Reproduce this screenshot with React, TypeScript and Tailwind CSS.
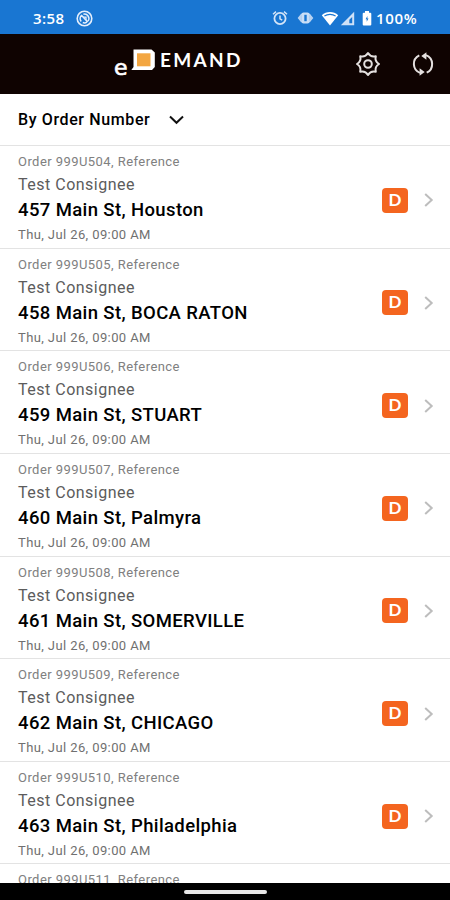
import React from "react";

interface Order {
  id: string;
  address: string;
}

const ORDERS: Order[] = [
  { id: "999U504", address: "457 Main St, Houston" },
  { id: "999U505", address: "458 Main St, BOCA RATON" },
  { id: "999U506", address: "459 Main St, STUART" },
  { id: "999U507", address: "460 Main St, Palmyra" },
  { id: "999U508", address: "461 Main St, SOMERVILLE" },
  { id: "999U509", address: "462 Main St, CHICAGO" },
  { id: "999U510", address: "463 Main St, Philadelphia" },
  { id: "999U511", address: "" },
];

function StatusBar() {
  return (
    <div className="flex h-[34px] shrink-0 items-center bg-[#1976d2] pt-[2px] pr-[32px] pl-[33px] text-white">
      <span className="w-[43px] font-['Open_Sans',sans-serif] text-[15px] leading-none font-semibold tracking-[0.4px] whitespace-nowrap">3:58</span>
      <svg width="17" height="17" viewBox="0 0 17 17" fill="none" stroke="#e4eefc">
        <circle cx="8.5" cy="8.5" r="7.3" strokeWidth="1.6" />
        <path d="M5.2 11.4A4.2 4.2 0 0 1 5.6 5.4M7.4 4.3a4.3 4.3 0 0 1 4.6 6.7M6.8 12.5a4 4 0 0 0 4-.4M5.2 5l6.5 7" strokeWidth="1.5" />
        <path d="M7.2 7.1h2.8v2.8" strokeWidth="1.3" />
      </svg>
      <div className="flex-1" />

      {/* Alarm */}
      <svg width="16" height="16" viewBox="0 0 16 16" fill="none" stroke="#d3e4f8" strokeWidth="1.8">
        <circle cx="8" cy="8.5" r="5.6" />
        <path d="M8 5.5v3.3l2.2 1.4M1 4.2l3-2.6M15 4.2l-3-2.6" strokeWidth="1.5" />
      </svg>
      {/* Vibrate */}
      <svg className="ml-[9px]" width="17" height="14" viewBox="0 0 17 14" fill="none">
        <path d="M4.8 2.8 1.5 7l3.3 4.2M12.2 2.8 15.5 7l-3.3 4.2" fill="#b7d2f2" stroke="#b7d2f2" strokeWidth="1.3" />
        <rect x="4.5" y="1.4" width="8" height="11.2" rx="2" fill="#c9def6" />
        <rect x="7.3" y="3.8" width="2.4" height="6.4" fill="#1976d2" />
      </svg>
      {/* Wifi */}
      <svg className="ml-[7px]" width="18" height="15" viewBox="0 0 18 15">
        <path d="M9 14.5.8 4.2C5.2 0 12.8 0 17.2 4.2z" fill="#fff" />
        <path d="M3.4 5C6.5 2.8 11.5 2.8 14.6 5" fill="none" stroke="#1976d2" strokeWidth="1.1" />
      </svg>
      {/* Signal */}
      <svg className="ml-px" width="15" height="15" viewBox="0 0 15 15">
        <path d="M14.2.8v13.400H.8z" fill="#cfe1f7" />
        <path d="M12.2 6v6.3H9.3V8.8z" fill="#1976d2" />
      </svg>
      {/* Battery */}
      <svg className="ml-[7px]" width="10" height="15" viewBox="0 0 10 15">
        <path d="M3 0h4v1.7h1.2q1.100 0 1.100 1.100v10.600q0 1.100-1.100 1.100H1.800Q.7 14.500.7 13.400V2.800q0-1.100 1.100-1.100H3z" fill="#fff" />
        <path d="M5.4 5 3.6 8.2h1.1v2.6l1.8-3.2H5.4z" fill="#1976d2" />
      </svg>
      <span className="ml-[4px] w-[42px] font-['Open_Sans',sans-serif] text-[15px] leading-none font-semibold tracking-[0.7px] whitespace-nowrap">100%</span>
    </div>
  );
}

function Logo() {
  return (
    <div className="flex h-[34px] w-[130px] items-start text-white">
      <span className="mt-[8px] w-[17px] font-['DejaVu_Sans',sans-serif] text-[22px] leading-[26px] [-webkit-text-stroke:0.7px_white]">e</span>
      <svg className="mt-[2px]" width="25" height="22" viewBox="0 0 25 22">
        <path d="M2.5.5H20.5L23.8 3.5v14.5L21 21H.3l2.2-3z" fill="#fff" />
        <rect x="6" y="4.3" width="13.5" height="13" fill="#f3a641" />
      </svg>
      <span className="mt-px ml-[4px] font-['Lato',sans-serif] text-[19px] leading-[24px] font-bold tracking-[2.3px]">EMAND</span>
    </div>
  );
}

function GearIcon() {
  return (
    <svg width="26" height="26" viewBox="0 0 26 26" fill="none" stroke="#e4e0df" strokeWidth="2" strokeLinejoin="round">
      <path d="M24 13Q19.5 15.7 20.8 20.8Q15.7 19.5 13 24Q10.3 19.5 5.2 20.8Q6.5 15.7 2 13Q6.5 10.3 5.2 5.2Q10.3 6.5 13 2Q15.7 6.5 20.8 5.2Q19.5 10.3 24 13z" />
      <circle cx="13" cy="13" r="3.8" />
    </svg>
  );
}

function SyncIcon() {
  return (
    <svg width="24" height="24" viewBox="0 0 24 24" fill="none" stroke="#e4e0df" strokeWidth="2">
      <path d="M8.3 3.3A9.6 9.6 0 0 0 9 20.9M15.7 20.7A9.6 9.6 0 0 0 15 3.1" />
      <path d="M15.4.3v7.4L10.3 4zM8.600 23.700v-7.400l5.100 3.700z" fill="#e4e0df" stroke="none" />
    </svg>
  );
}

function OrderRow({ order }: { order: Order }) {
  return (
    <li className="flex h-[102.65px] shrink-0 items-center border-b border-[#e3e3e3] pr-[14px] pl-[18px]">
      <div className="flex-1 self-start whitespace-nowrap">
        <p className="mt-[6px] text-[13px] leading-[20px] tracking-[0.44px] text-[#808080]">Order {order.id}, Reference</p>
        {order.address && (
          <>
            <p className="mt-[1px] text-[16px] leading-[24px] tracking-[0.5px] text-[#5c5c5c]">Test Consignee</p>
            <p className="text-[18.5px] leading-[26px] font-medium tracking-[0.38px] text-black">{order.address}</p>
            <p className="mt-[2px] text-[13px] leading-[20px] tracking-[0.4px] text-[#707070]">Thu, Jul 26, 09:00 AM</p>
          </>
        )}
      </div>
      <div className="mt-[7px] flex h-[25px] w-[26px] items-center justify-center rounded-[4px] bg-[#f4651f] pb-[2px] font-[Lato,sans-serif] text-[17px] leading-none font-bold text-white">
        D
      </div>
      <svg className="mt-[7px] ml-[16px]" width="12" height="16" viewBox="0 0 12 16" fill="none" stroke="#bdbdbd" strokeWidth="2">
        <path d="m1.200 2 6.500 6-6.500 6" />
      </svg>
    </li>
  );
}

export default function App() {
  return (
    <div className="flex h-[900px] w-[450px] flex-col overflow-hidden bg-white font-[Roboto,sans-serif]">
      <StatusBar />

      <header className="flex h-[60px] shrink-0 items-center bg-[#0f0301] pr-[15px] pl-[114px]">
        <Logo />
        <div className="flex-1" />
        <GearIcon />
        <div className="w-[30px]" />
        <SyncIcon />
      </header>

      {/* Sort selector */}
      <div className="flex h-[52px] shrink-0 items-center border-b border-[#e3e3e3] pl-[18px]">
        <span className="w-[151px] text-[16px] font-medium tracking-[0.62px] whitespace-nowrap text-black">By Order Number</span>
        <svg width="16" height="10" viewBox="0 0 16 10" fill="none" stroke="#111" strokeWidth="2">
          <path d="m1 1.500 6.500 6.300L14 1.500" />
        </svg>
      </div>

      <ul className="flex min-h-0 flex-1 flex-col overflow-hidden">
        {ORDERS.map((order) => (
          <OrderRow key={order.id} order={order} />
        ))}
      </ul>

      {/* Gesture bar */}
      <div className="flex h-[17px] shrink-0 justify-center bg-black pt-[7px]">
        <div className="h-[4px] w-[83px] rounded-full bg-[#e8e8e8]" />
      </div>
    </div>
  );
}
